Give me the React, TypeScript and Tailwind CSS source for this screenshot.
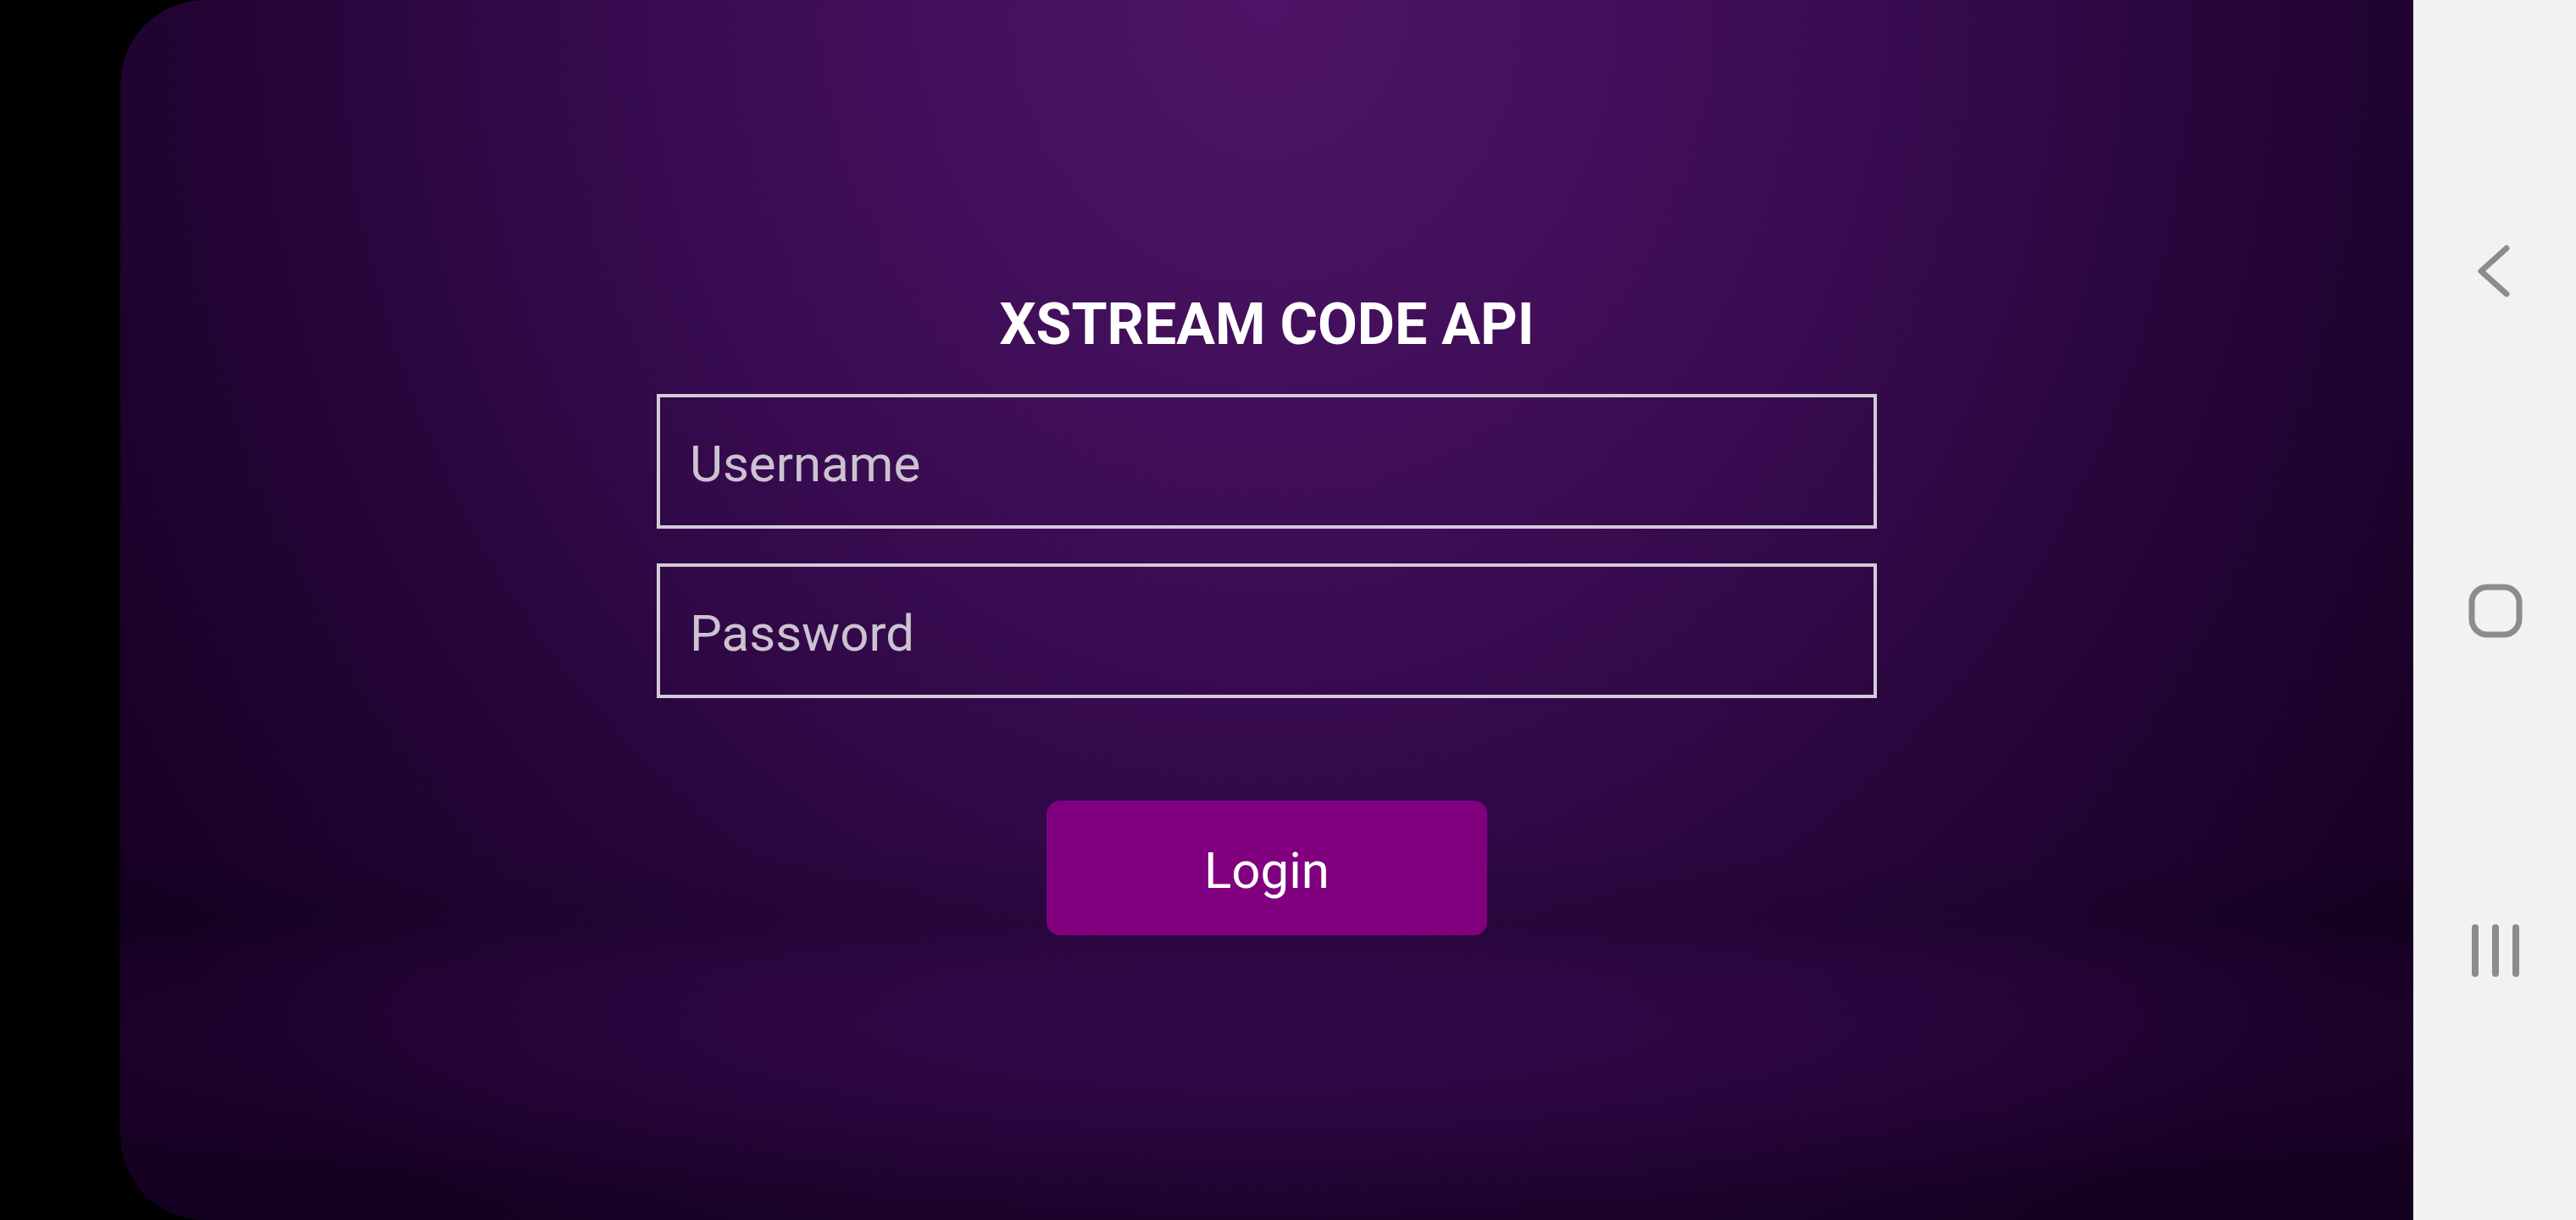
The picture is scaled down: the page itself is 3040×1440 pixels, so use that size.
import React from "react";

function BackIcon() {
  return (
    <svg width="44" height="66" viewBox="0 0 44 66" fill="none">
      <path d="M36 6 L6 33 L36 60" stroke="#8c8c8c" strokeWidth="7" strokeLinecap="round" strokeLinejoin="round" />
    </svg>
  );
}

function HomeIcon() {
  return (
    <svg width="66" height="66" viewBox="0 0 66 66" fill="none">
      <rect x="5" y="5" width="56" height="56" rx="18" stroke="#8c8c8c" strokeWidth="7" />
    </svg>
  );
}

function RecentsIcon() {
  return (
    <svg width="60" height="64" viewBox="0 0 60 64" fill="none">
      <line x1="6" y1="5" x2="6" y2="59" stroke="#8c8c8c" strokeWidth="8" strokeLinecap="round" />
      <line x1="30" y1="5" x2="30" y2="59" stroke="#8c8c8c" strokeWidth="8" strokeLinecap="round" />
      <line x1="54" y1="5" x2="54" y2="59" stroke="#8c8c8c" strokeWidth="8" strokeLinecap="round" />
    </svg>
  );
}

export default function App() {
  return (
    <div
      className="w-[3040px] h-[1440px] flex bg-black overflow-hidden"
      style={{ fontFamily: "Roboto, 'Noto Sans', sans-serif" }}
    >
      <div className="w-[142px] h-full bg-black shrink-0" />
      <div className="flex-1 h-full rounded-l-[100px] overflow-hidden bg-[radial-gradient(ellipse_65%_14%_at_50%_85%,rgba(55,8,80,0.6),rgba(55,8,80,0)),linear-gradient(to_bottom,rgba(8,0,16,0)_0%,rgba(8,0,16,0)_70%,rgba(8,0,16,0.2)_76%,rgba(8,0,16,0)_80%,rgba(8,0,16,0)_90%,rgba(8,0,16,0.2)_100%),radial-gradient(ellipse_60%_125%_at_50%_0%,#4e1467_0%,#44105c_22%,#380b50_45%,#28063c_68%,#170024_100%)]">
        <div className="flex flex-col items-center pt-[343px]">
          <h1 className="text-[68px] leading-[80px] font-bold text-white tracking-[0px]">
            XSTREAM CODE API
          </h1>
          <input
            type="text"
            placeholder="Username"
            className="mt-[42px] w-[1440px] h-[159px] border-[4px] border-[#d3cbd8] bg-transparent pl-[35px] pt-[6px] text-[60px] text-white placeholder:text-[#cbc3d0] outline-none"
          />
          <input
            type="password"
            placeholder="Password"
            className="mt-[41px] w-[1440px] h-[159px] border-[4px] border-[#d3cbd8] bg-transparent pl-[35px] pt-[6px] text-[60px] text-white placeholder:text-[#cbc3d0] outline-none"
          />
          <button className="mt-[121px] w-[520px] h-[159px] rounded-[16px] bg-[#800080] text-white text-[60px] pt-[6px] flex items-center justify-center">
            Login
          </button>
        </div>
      </div>
      <div className="w-[192px] h-full bg-[#f2f2f2] shrink-0 flex flex-col items-center">
        <div className="mt-[287px]">
          <BackIcon />
        </div>
        <div className="mt-[335px] ml-[2px]">
          <HomeIcon />
        </div>
        <div className="mt-[336px] ml-[2px]">
          <RecentsIcon />
        </div>
      </div>
    </div>
  );
}
